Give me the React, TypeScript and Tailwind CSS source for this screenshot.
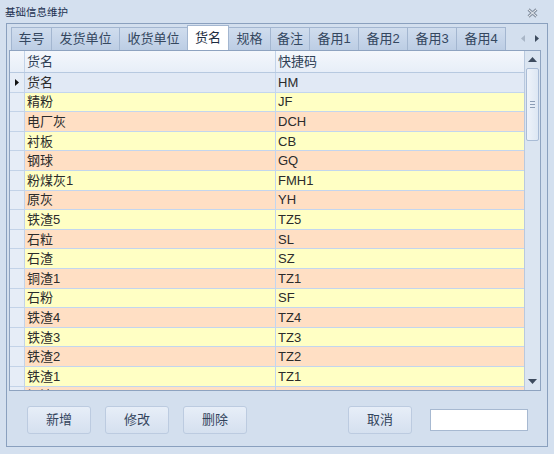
const font = "font-['Liberation_Sans','Noto_Sans_CJK_SC',sans-serif]";

const tabs: { label: string; w: string }[] = [
  { label: "车号", w: "w-[41px]" },
  { label: "发货单位", w: "w-[68px]" },
  { label: "收货单位", w: "w-[68px]" },
  { label: "货名", w: "w-[42px]" },
  { label: "规格", w: "w-[42px]" },
  { label: "备注", w: "w-[39px]" },
  { label: "备用1", w: "w-[49px]" },
  { label: "备用2", w: "w-[49px]" },
  { label: "备用3", w: "w-[49px]" },
  { label: "备用4", w: "w-[49px]" },
];

const rows: [string, string][] = [
  ["货名", "HM"],
  ["精粉", "JF"],
  ["电厂灰", "DCH"],
  ["衬板", "CB"],
  ["钢球", "GQ"],
  ["粉煤灰1", "FMH1"],
  ["原灰", "YH"],
  ["铁渣5", "TZ5"],
  ["石粒", "SL"],
  ["石渣", "SZ"],
  ["铜渣1", "TZ1"],
  ["石粉", "SF"],
  ["铁渣4", "TZ4"],
  ["铁渣3", "TZ3"],
  ["铁渣2", "TZ2"],
  ["铁渣1", "TZ1"],
  ["钢渣", "GZ"],
];

function Btn({ label, className = "" }: { label: string; className?: string }) {
  return (
    <button
      className={
        "w-[64px] h-[28px] rounded-[3px] border border-[#bccbe0] bg-gradient-to-b from-[#e7eef8] to-[#d5e0ef] text-[13px] text-[#33445c] " +
        className
      }
    >
      {label}
    </button>
  );
}

function Scrollbar() {
  return (
    <div className="w-[16px] h-full border-l border-[#b9c9de] bg-[#dbe5f1] flex flex-col items-center">
      <div className="h-[16px] w-full flex items-center justify-center">
        <svg width="9" height="5" viewBox="0 0 9 5">
          <path d="M0 5 L4.5 0 L9 5 Z" fill="#3d4b5e" />
        </svg>
      </div>
      <div className="mt-[1px] w-[13px] h-[73px] rounded-[2px] border border-[#a9bcd6] bg-gradient-to-r from-[#eef3fa] to-[#dde7f3] flex flex-col items-center justify-center gap-[2px]">
        <div className="w-[5px] h-px bg-[#8c9db5]" />
        <div className="w-[5px] h-px bg-[#8c9db5]" />
        <div className="w-[5px] h-px bg-[#8c9db5]" />
      </div>
      <div className="flex-1" />
      <div className="h-[16px] w-full flex items-center justify-center mb-[1px]">
        <svg width="9" height="5" viewBox="0 0 9 5">
          <path d="M0 0 L4.5 5 L9 0 Z" fill="#3d4b5e" />
        </svg>
      </div>
    </div>
  );
}

function Grid() {
  return (
    <div className="ml-[2px] w-[532px] h-[341px] border border-[#8ea3c0] bg-white flex overflow-hidden">
      <div className="flex-1 flex flex-col overflow-hidden">
        <div className="h-[22px] shrink-0 flex border-b border-[#b7c9e0] bg-gradient-to-b from-[#f4f7fc] to-[#e7eef8] text-[13px] text-[#2f3f55]">
          <div className="w-[15px] border-r border-[#c3d3e8]" />
          <div className="w-[251px] border-r border-[#c3d3e8] pl-[2px] flex items-center">货名</div>
          <div className="flex-1 pl-[2px] flex items-center">快捷码</div>
        </div>
        {rows.map(([name, code], i) => {
          const bg = i === 0 ? "bg-[#e1e9f5]" : i % 2 === 1 ? "bg-[#ffffc4]" : "bg-[#ffdfc4]";
          return (
            <div key={i} className="h-[19.6px] shrink-0 flex text-[13px] text-[#2b2b2b] leading-none">
              <div className="w-[15px] bg-[#e6edf7] border-r border-b border-[#c3d3e8] flex items-center justify-center">
                {i === 0 && (
                  <svg width="4" height="7" viewBox="0 0 4 7">
                    <path d="M0 0 L4 3.5 L0 7 Z" fill="#111" />
                  </svg>
                )}
              </div>
              <div className={"w-[251px] pl-[2px] flex items-center border-r border-b border-[#c3d6ee] " + bg}>
                {name}
              </div>
              <div className={"flex-1 pl-[2px] flex items-center border-b border-[#c3d6ee] " + bg}>{code}</div>
            </div>
          );
        })}
      </div>
      <Scrollbar />
    </div>
  );
}

export default function App() {
  return (
    <div className={"w-[554px] h-[454px] bg-[#d4e0ef] flex flex-col overflow-hidden " + font}>
      <div className="h-[23px] shrink-0 flex items-center justify-between pl-[5px] pr-[16px] pt-[2px]">
        <span className="text-[10.5px] text-[#1b3050]">基础信息维护</span>
        <svg width="11" height="10" viewBox="0 0 11 10">
          <path d="M1.5 1.5 L9.5 8.5 M9.5 1.5 L1.5 8.5" stroke="#8a96a6" strokeWidth="3" />
          <path d="M1.5 1.5 L9.5 8.5 M9.5 1.5 L1.5 8.5" stroke="#f4f7fb" strokeWidth="1" />
        </svg>
      </div>
      <div className="ml-[6px] w-[542px] h-[424px] border border-[#8aa0be] bg-[#d3dfee] flex flex-col">
        <div className="h-[26px] shrink-0 flex items-end pl-[4px]">
          {tabs.map((t) => {
            const sel = t.label === "货名";
            return (
              <div
                key={t.label}
                className={
                  "shrink-0 flex items-center justify-center text-[13px] border-t border-r border-[#a3b6d0] " +
                  t.w +
                  (t.label === "车号" ? " border-l " : " ") +
                  (sel
                    ? "h-[25px] bg-white text-[#1d2c40] border-l border-[#9fb2cc] -ml-px"
                    : "h-[23px] bg-gradient-to-b from-[#d0ddee] to-[#bccde4] text-[#34475f]")
                }
              >
                {t.label}
              </div>
            );
          })}
          <div className="flex-1 h-[23px] flex items-center justify-end gap-[10px] pr-[8px]">
            <svg width="4" height="7" viewBox="0 0 4 7">
              <path d="M4 0 L0 3.5 L4 7 Z" fill="#a9b6c7" />
            </svg>
            <svg width="4" height="7" viewBox="0 0 4 7">
              <path d="M0 0 L4 3.5 L0 7 Z" fill="#3d4b5e" />
            </svg>
          </div>
        </div>
        <Grid />
        <div className="flex items-center pl-[20px] pt-[15px]">
          <Btn label="新增" />
          <Btn label="修改" className="ml-[14px]" />
          <Btn label="删除" className="ml-[14px]" />
          <Btn label="取消" className="ml-[101px]" />
          <div className="ml-[18px] w-[98px] h-[22px] border border-[#a7b9d1] bg-white" />
        </div>
      </div>
    </div>
  );
}
